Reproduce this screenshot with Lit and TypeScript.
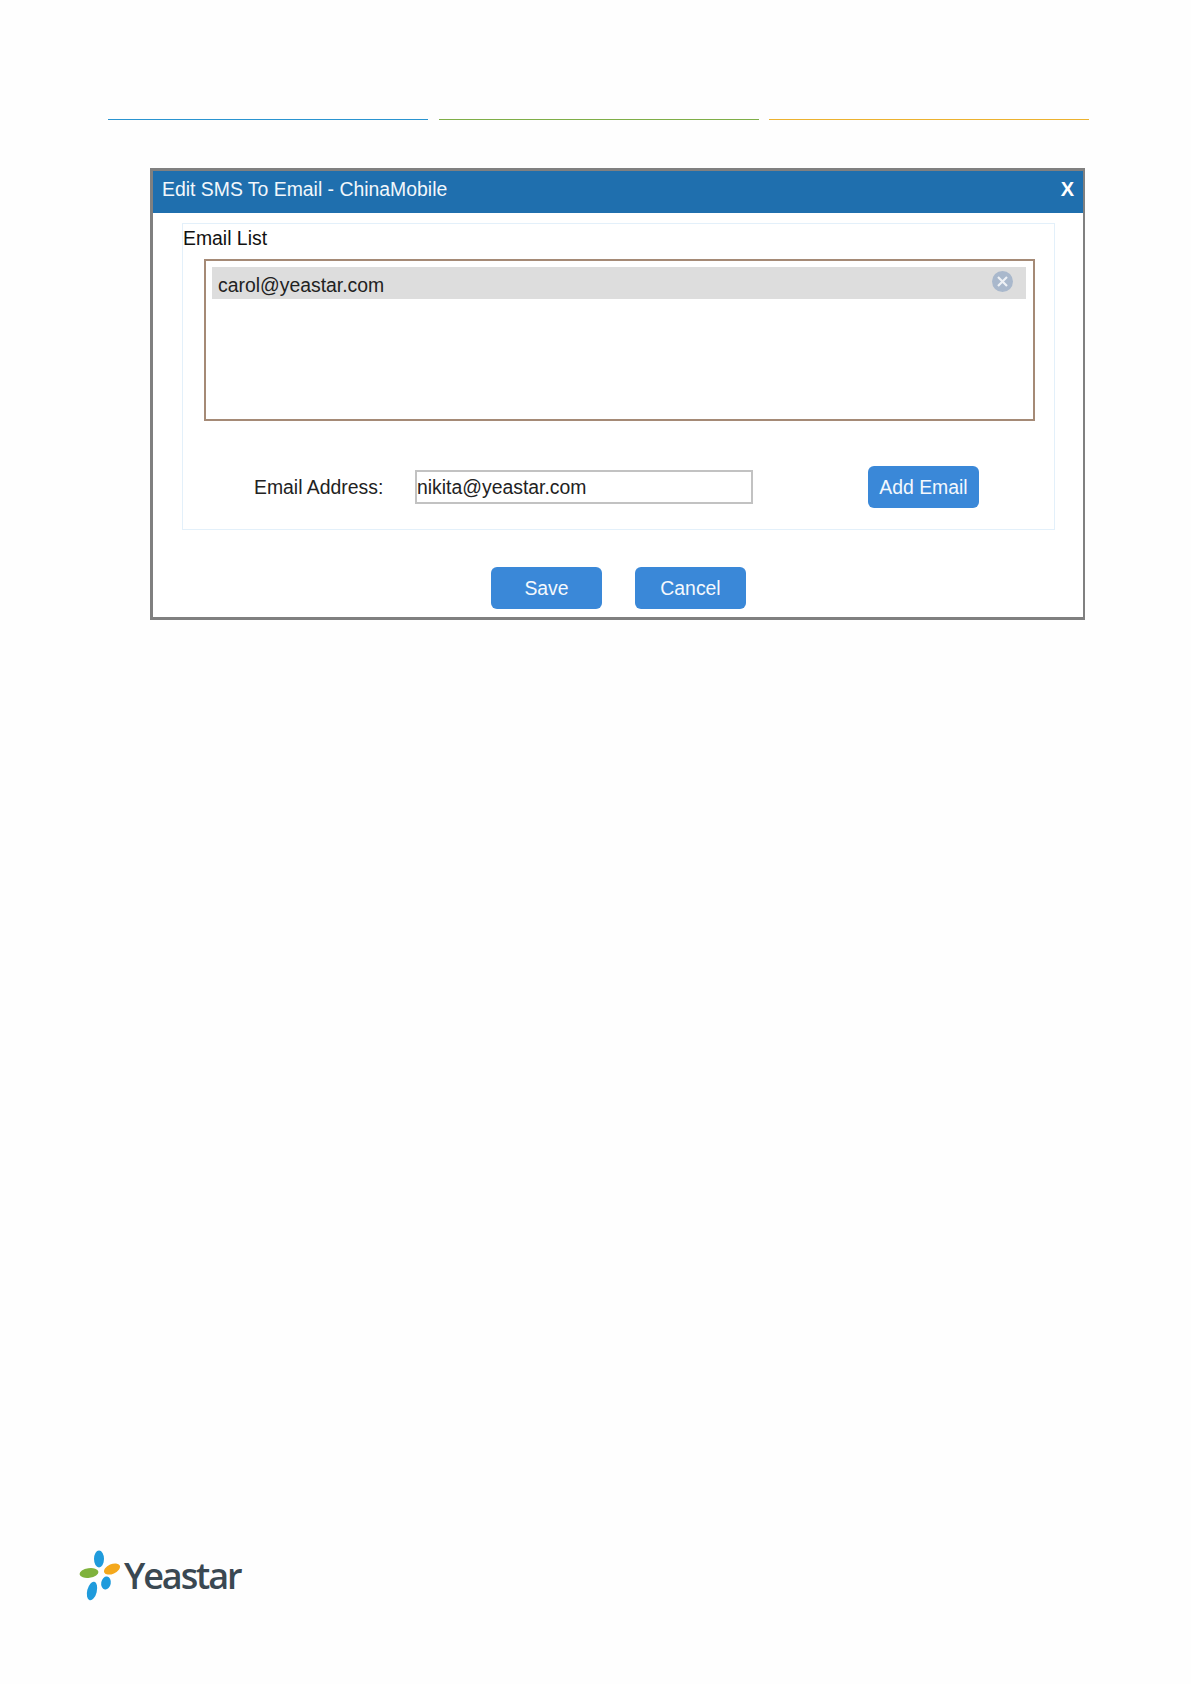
import { LitElement, html, css } from "lit";
import { customElement } from "lit/decorators.js";

@customElement("app-root")
export class AppRoot extends LitElement {
  static styles = css`
    :host {
      display: flex;
      flex-direction: column;
      box-sizing: border-box;
      width: 1191px;
      height: 1684px;
      background: #fefefe;
      font-family: "Liberation Sans", Arial, sans-serif;
      font-size: 19.4px;
      color: #222;
    }
    * { box-sizing: border-box; }
    .rules {
      display: flex;
      justify-content: space-between;
      margin: 119px 0 0 108px;
      width: 981px;
    }
    .rule { flex: none; width: 320px; height: 1px; }
    .r1 { background: #2a94d0; }
    .r2 { background: #7fae48; }
    .r3 { background: #ecb22f; }
    .dialog {
      width: 935px;
      height: 452px;
      margin: 48px 0 0 150px;
      border: 3px solid #808080;
      border-right-width: 2px;
      background: #fff;
      display: flex;
      flex-direction: column;
    }
    .title {
      flex: none;
      height: 42px;
      background: #1f6fae;
      color: #f2f7fb;
      display: flex;
      align-items: center;
      justify-content: space-between;
      padding: 0 9px 6px 9px;
    }
    .close { color: #fff; font-weight: 700; font-size: 20px; }
    .group {
      flex: none;
      margin: 10px 28px 0 29px;
      height: 307px;
      border: 1px solid #e3f0fa;
      display: flex;
      flex-direction: column;
    }
    .legend {
      height: 29px;
      display: flex;
      align-items: center;
      color: #111;
    }
    .list {
      margin: 6px 19px 0 21px;
      height: 162px;
      border: 2px solid #a58a76;
      padding: 6px 7px 6px 6px;
      background: #fff;
    }
    .item {
      height: 32px;
      background: #dddddd;
      display: flex;
      justify-content: space-between;
      padding: 0 13.5px 0 6px;
      line-height: 36px;
    }
    .del { width: 21px; height: 21px; margin-top: 4px; display: block; }
    .form {
      display: flex;
      align-items: center;
      margin-top: 45px;
      height: 42px;
    }
    .label { margin-left: 71px; width: 161px; color: #222; }
    .input {
      width: 338px;
      height: 34px;
      border: 2px solid #c2c2c2;
      line-height: 30px;
      color: #222;
    }
    .btn {
      flex: none;
      width: 111px;
      height: 42px;
      border-radius: 6px;
      background: #3a88d8;
      color: #f4f8fd;
      display: flex;
      align-items: center;
      justify-content: center;
    }
    .add { margin-left: 115px; }
    .actions {
      display: flex;
      gap: 33px;
      margin: 37px 0 0 338px;
    }
    .logo {
      display: flex;
      align-items: center;
      margin: auto 0 82px 79px;
      height: 52px;
    }
    .mark { width: 42px; height: 52px; display: block; flex: none; }
    .brand {
      font-family: "Open Sans", sans-serif;
      font-size: 36px;
      font-weight: 600;
      letter-spacing: -2.1px;
      color: #3a4852;
      margin-left: 3px;
      line-height: 52px;
    }
  `;

  render() {
    return html`
      <div class="rules">
        <div class="rule r1"></div>
        <div class="rule r2"></div>
        <div class="rule r3"></div>
      </div>
      <div class="dialog">
        <div class="title">
          <span>Edit SMS To Email - ChinaMobile</span>
          <span class="close">X</span>
        </div>
        <div class="group">
          <div class="legend">Email List</div>
          <div class="list">
            <div class="item">
              <span>carol@yeastar.com</span>
              <svg class="del" viewBox="0 0 21 21">
                <circle cx="10.5" cy="10.5" r="10.5" fill="#a9b8cc"></circle>
                <path d="M6 6l9 9M15 6l-9 9" stroke="#eef1f5" stroke-width="2.2" fill="none"></path>
              </svg>
            </div>
          </div>
          <div class="form">
            <span class="label">Email Address:</span>
            <div class="input">nikita@yeastar.com</div>
            <div class="btn add">Add Email</div>
          </div>
        </div>
        <div class="actions">
          <div class="btn">Save</div>
          <div class="btn">Cancel</div>
        </div>
      </div>
      <div class="logo">
        <svg class="mark" viewBox="0 0 42 52">
          <ellipse cx="20" cy="9" rx="5" ry="8.5" fill="#1f9bdc"></ellipse>
          <ellipse cx="33" cy="19" rx="8.5" ry="4.8" fill="#f4a81c" transform="rotate(-24 33 19)"></ellipse>
          <ellipse cx="10" cy="23" rx="9.5" ry="4.8" fill="#7fb23c" transform="rotate(-8 10 23)"></ellipse>
          <ellipse cx="13" cy="41" rx="4.8" ry="9.5" fill="#1f9bdc" transform="rotate(14 13 41)"></ellipse>
          <ellipse cx="27" cy="33" rx="4.8" ry="6.5" fill="#1f9bdc" transform="rotate(10 27 33)"></ellipse>
        </svg>
        <span class="brand">Yeastar</span>
      </div>
    `;
  }
}
